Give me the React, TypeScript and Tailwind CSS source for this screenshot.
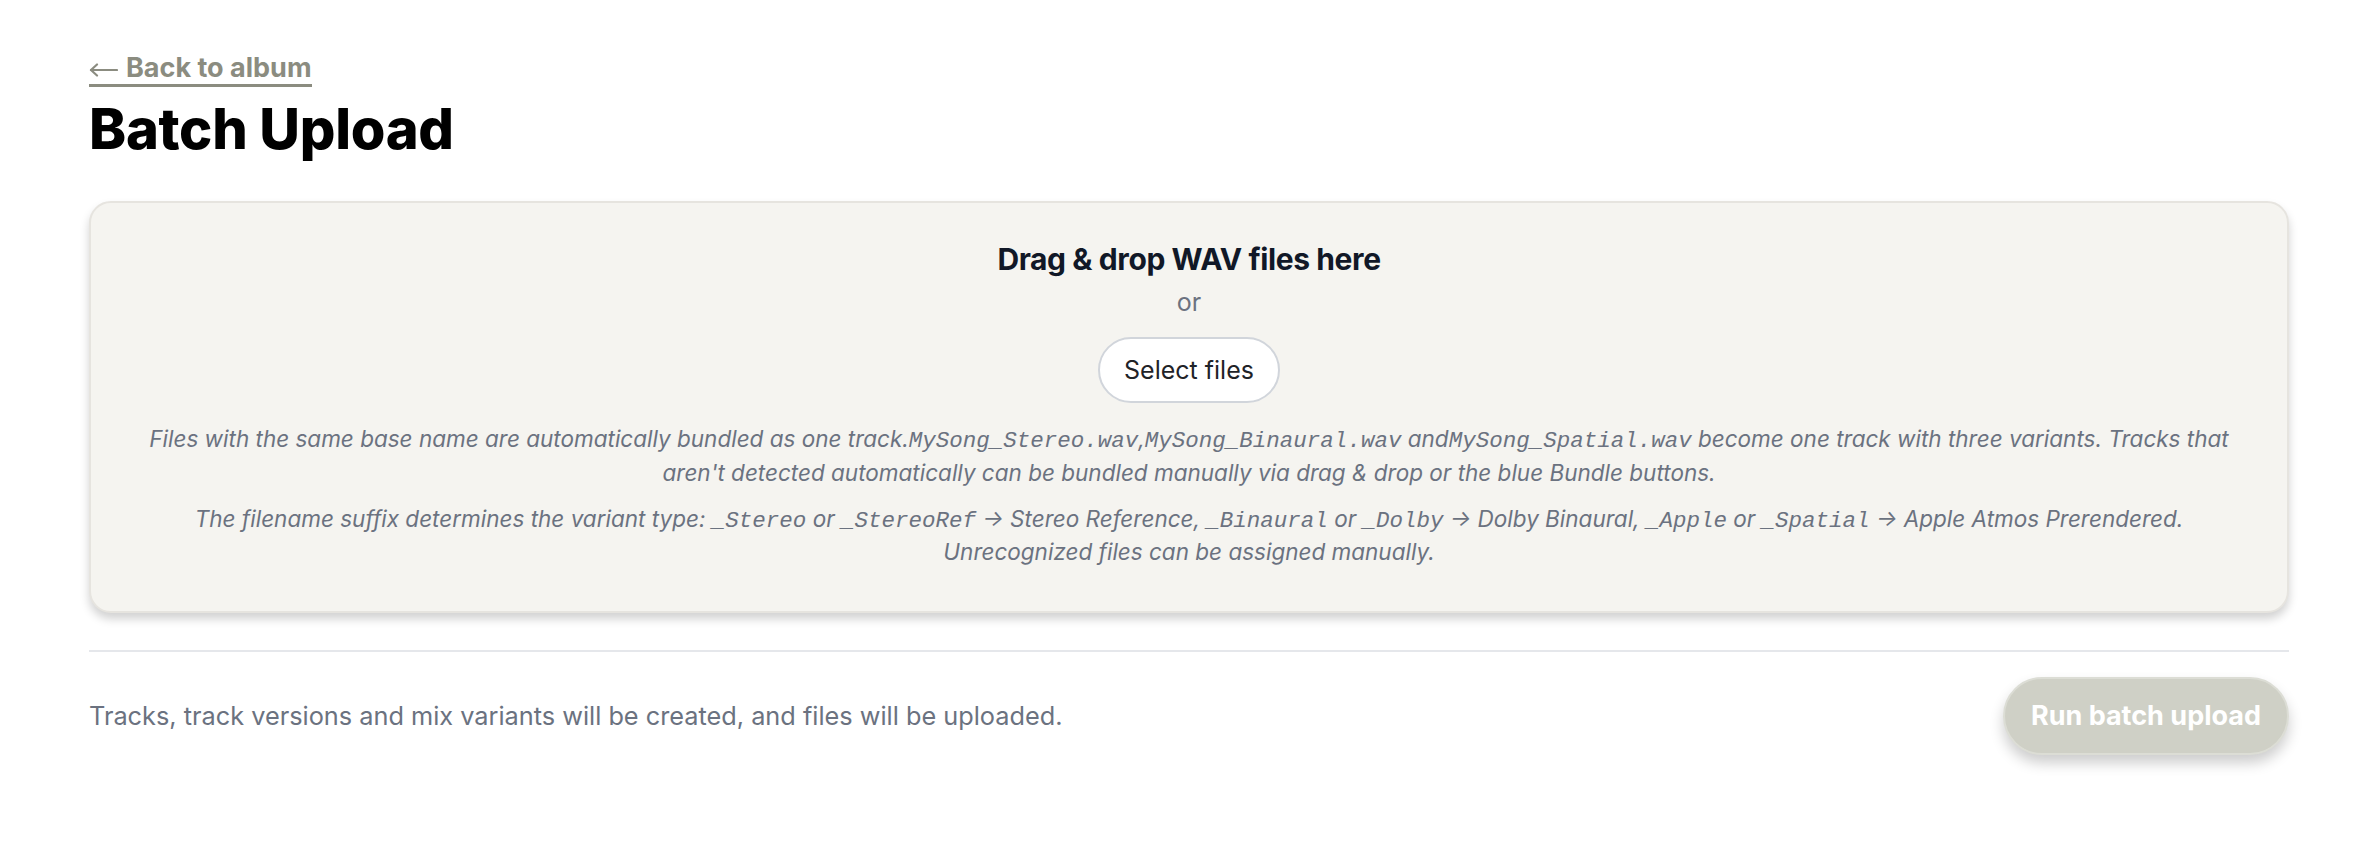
import React from "react";

function Code({ children }: { children: React.ReactNode }) {
  return <code className="font-['Liberation_Mono',monospace] text-[22.5px] leading-none">{children}</code>;
}

function ArrowLeft() {
  return (
    <svg width="29" height="14" viewBox="0 0 29 14" fill="none" stroke="#8b8c80" strokeWidth="2.2" strokeLinecap="round" strokeLinejoin="round">
      <path d="M28 7H2" />
      <path d="M8 1.5L2 7l6 5.5" />
    </svg>
  );
}

export default function App() {
  return (
    <div className="min-h-screen bg-white px-[89px] pt-[52px] font-['Inter',sans-serif]">
      <div className="flex">
        <a
          href="#"
          className="flex items-center gap-[8px] border-b-[3px] border-[#8b8c80] text-[27px] font-bold leading-[32px] text-[#8b8c80]"
        >
          <span className="mt-[4px] flex">
            <ArrowLeft />
          </span>
          <span>Back to album</span>
        </a>
      </div>
      <h1 className="mt-[10px] text-[56px] font-extrabold leading-[64px] tracking-[-0.3px] text-black">
        Batch Upload
      </h1>

      <div className="mt-[40px] rounded-[22px] border-2 border-[#e6e4df] bg-[#f5f4f0] px-[44px] pb-[42px] pt-[34px] text-center shadow-[0_6px_10px_rgba(0,0,0,0.18)]">
        <div className="text-[30px] font-bold leading-[44px] tracking-[-0.4px] text-[#111827]">
          Drag &amp; drop WAV files here
        </div>
        <div className="text-[25px] leading-[42px] text-[#6b7280]">or</div>
        <button className="mt-[14px] rounded-full border-2 border-[#d1d5db] bg-white px-[24px] py-[11px] text-[25px] leading-[40px] text-[#1f2328]">
          Select files
        </button>
        <p className="mt-[19px] text-[22.5px] italic leading-[33.75px] text-[#6b7280]">
          Files with the same base name are automatically bundled as one track.<Code>MySong_Stereo.wav</Code>,<Code>MySong_Binaural.wav</Code> and<Code>MySong_Spatial.wav</Code> become one track with three variants. Tracks that aren't detected automatically can be bundled manually via drag &amp; drop or the blue Bundle buttons.
        </p>
        <p className="mt-[12px] text-[22.5px] italic leading-[33.75px] text-[#6b7280]">
          The filename suffix determines the variant type: <Code>_Stereo</Code> or <Code>_StereoRef</Code> → Stereo Reference, <Code>_Binaural</Code> or <Code>_Dolby</Code> → Dolby Binaural, <Code>_Apple</Code> or <Code>_Spatial</Code> → Apple Atmos Prerendered. Unrecognized files can be assigned manually.
        </p>
      </div>

      <div className="mt-[37px] border-t-2 border-[#e5e7eb]" />

      <div className="flex items-center justify-between pt-[25px]">
        <p className="text-[25.3px] leading-[38px] text-[#6b7280]">
          Tracks, track versions and mix variants will be created, and files will be uploaded.
        </p>
        <button className="rounded-full border-2 border-[#dcddd5] bg-[#cfd0c6] px-[26px] py-[17px] text-[27px] font-bold leading-[40px] text-white shadow-[0_8px_14px_rgba(0,0,0,0.2)]">
          Run batch upload
        </button>
      </div>
    </div>
  );
}
